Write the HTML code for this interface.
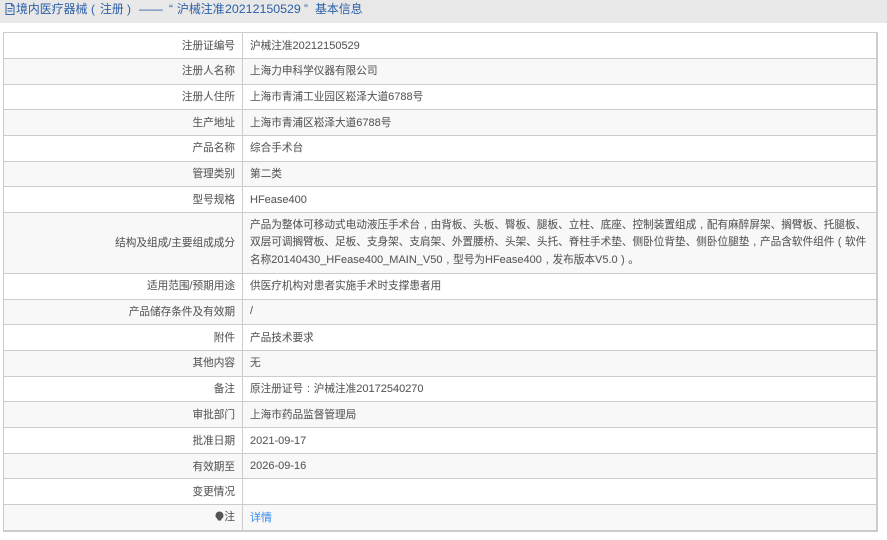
<!DOCTYPE html>
<html><head><meta charset="utf-8">
<style>
html,body{margin:0;padding:0;width:887px;height:540px;overflow:hidden;background:#fff}
body{font-family:"Liberation Sans","Noto Sans CJK SC",sans-serif;font-size:10.64px;color:#5a5a5a;position:relative;text-shadow:0 0 .4px rgba(85,85,85,.4)}
.hd{position:absolute;left:0;top:0;width:887px;height:23px;background:#e8e8e8}
.hd span{position:absolute;top:1px;line-height:16px;font-size:11.9px;color:#2a5fa8;white-space:nowrap;text-shadow:none}
.hd svg{position:absolute;left:5px;top:3px}
.r{position:absolute;left:3px;width:875px;box-sizing:border-box;border:1px solid #ccc;border-bottom:0;border-right-width:2px}
.r.e{background:#f8f8f8}
.l{position:absolute;left:0;top:0;bottom:0;width:231px;box-sizing:border-box;padding-bottom:2px;text-align:right;white-space:nowrap;display:flex;align-items:center;justify-content:flex-end}
.v{position:absolute;left:238px;right:0;top:0;bottom:0;box-sizing:border-box;padding-bottom:2px;border-left:1px solid #ccc;padding-left:7px;display:flex;align-items:center;white-space:nowrap}
.d .l,.d .v{padding-bottom:0}
.m{line-height:17.2px;display:block}
.n{font-size:11px}
.p{display:inline-block;width:1em;text-align:center}
a{color:#3b97ff;text-decoration:none;font-size:11px}
.end{position:absolute;left:3px;top:530px;width:875px;height:2px;background:#ccc}
</style></head><body>
<div class="hd"><svg width="10" height="12" viewBox="0 0 10 12"><path d="M1 .5h5.500l2.500 2.500v8.500h-8zM6.500 .5v2.500h2.500M2.500 5.500h5M2.500 8h5" fill="none" stroke="#3a66ad" stroke-width="1"/></svg>
<span style="left:16px">境内医疗器械</span><span style="left:91px">(</span><span style="left:100px">注册</span><span style="left:127px">)</span><span style="left:139px;letter-spacing:0">——</span><span style="left:169px">“</span><span style="left:177px">沪械注准</span><span style="left:225px;font-size:12.4px">20212150529</span><span style="left:304px">”</span><span style="left:315px">基本信息</span></div>
<div class="r d" style="top:32px;height:26px"><div class="l">注册证编号</div><div class="v"><span>沪械注准<span class="n">20212150529</span></span></div></div>
<div class="r e" style="top:58px;height:26px"><div class="l">注册人名称</div><div class="v">上海力申科学仪器有限公司</div></div>
<div class="r" style="top:84px;height:25px"><div class="l">注册人住所</div><div class="v"><span>上海市青浦工业园区崧泽大道<span class="n">6788</span>号</span></div></div>
<div class="r e d" style="top:109px;height:26px"><div class="l">生产地址</div><div class="v"><span>上海市青浦区崧泽大道<span class="n">6788</span>号</span></div></div>
<div class="r" style="top:135px;height:26px"><div class="l">产品名称</div><div class="v">综合手术台</div></div>
<div class="r e" style="top:161px;height:25px"><div class="l">管理类别</div><div class="v">第二类</div></div>
<div class="r d" style="top:186px;height:26px"><div class="l">型号规格</div><div class="v"><span class="n">HFease400</span></div></div>
<div class="r e" style="top:212px;height:61px"><div class="l">结构及组成/主要组成成分</div><div class="v" style="padding-bottom:0"><span class="m">产品为整体可移动式电动液压手术台<span class="p">,</span>由背板、头板、臀板、腿板、立柱、底座、控制装置组成<span class="p">,</span>配有麻醉屏架、搁臂板、托腿板、<br>双层可调搁臂板、足板、支身架、支肩架、外置腰桥、头架、头托、脊柱手术垫、侧卧位背垫、侧卧位腿垫<span class="p">,</span>产品含软件组件<span class="p">(</span>软件<br>名称<span class="n">20140430_HFease400_MAIN_V50</span><span class="p">,</span>型号为<span class="n">HFease400</span><span class="p">,</span>发布版本<span class="n">V5.0</span><span class="p">)</span>。</span></div></div>
<div class="r" style="top:273px;height:26px"><div class="l">适用范围/预期用途</div><div class="v">供医疗机构对患者实施手术时支撑患者用</div></div>
<div class="r e" style="top:299px;height:25px"><div class="l">产品储存条件及有效期</div><div class="v">/</div></div>
<div class="r d" style="top:324px;height:26px"><div class="l">附件</div><div class="v">产品技术要求</div></div>
<div class="r e" style="top:350px;height:26px"><div class="l">其他内容</div><div class="v">无</div></div>
<div class="r" style="top:376px;height:25px"><div class="l">备注</div><div class="v"><span>原注册证号<span class="p">:</span>沪械注准<span class="n">20172540270</span></span></div></div>
<div class="r e d" style="top:401px;height:26px"><div class="l">审批部门</div><div class="v">上海市药品监督管理局</div></div>
<div class="r d" style="top:427px;height:26px"><div class="l">批准日期</div><div class="v"><span class="n">2021-09-17</span></div></div>
<div class="r e d" style="top:453px;height:25px"><div class="l">有效期至</div><div class="v"><span class="n">2026-09-16</span></div></div>
<div class="r d" style="top:478px;height:26px"><div class="l">变更情况</div><div class="v"></div></div>
<div class="r e" style="top:504px;height:26px"><div class="l"><svg width="9" height="11" viewBox="0 0 9 11"><path d="M4.500 .5a4 4 0 0 1 2.200 7.300l-.7 1.700h-3l-.7-1.700a4 4 0 0 1 2.200-7.300z" fill="#555"/></svg>注</div><div class="v"><a href="#">详情</a></div></div>
<div class="end"></div>
</body></html>
